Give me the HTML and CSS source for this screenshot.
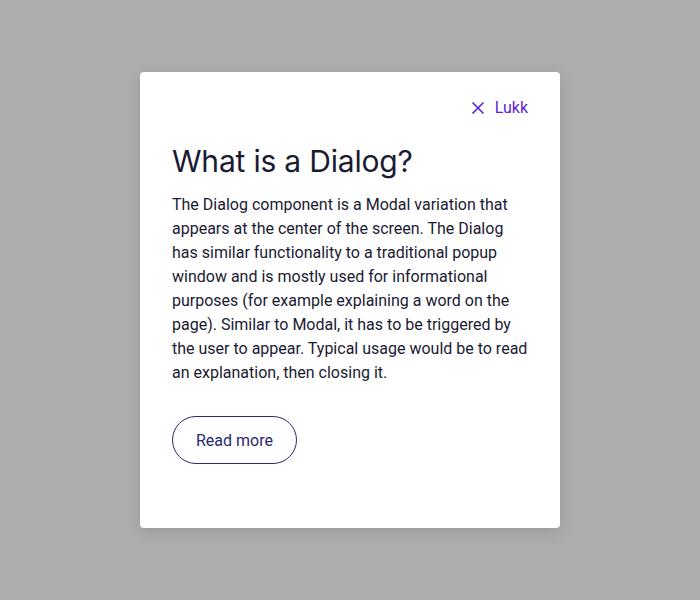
FILE: index.html
```html
<!DOCTYPE html>
<html lang="en">
<head>
<meta charset="utf-8">
<link rel="stylesheet" href="styles.css">
</head>
<body>
<div class="overlay">
  <div class="dialog" role="dialog">
    <div class="dialog-top">
      <button class="close">
        <svg width="14" height="14" viewBox="0 0 14 14" aria-hidden="true"><path d="M1.5 1.5 L12.5 12.5 M12.5 1.5 L1.5 12.5" stroke="currentColor" stroke-width="1.6" fill="none"/></svg>
        <span>Lukk</span>
      </button>
    </div>
    <h1 class="title">What is a Dialog?</h1>
    <p class="text">The Dialog component is a Modal variation that appears at the center of the screen. The Dialog has similar functionality to a traditional popup window and is mostly used for informational purposes (for example explaining a word on the page). Similar to Modal, it has to be triggered by the user to appear. Typical usage would be to read an explanation, then closing it.</p>
    <div class="actions">
      <button class="btn-outline">Read more</button>
    </div>
  </div>
</div>
</body>
</html>
```
FILE: styles.css
```css
html, body {
  margin: 0;
  padding: 0;
  height: 100%;
}
body {
  background: #adadad;
  font-family: Roboto, "Liberation Sans", sans-serif;
}
.overlay {
  height: 100%;
  display: flex;
  align-items: center;
  justify-content: center;
}
.dialog {
  width: 420px;
  box-sizing: border-box;
  background: #fff;
  border-radius: 4px;
  box-shadow: 0 4px 16px rgba(0,0,0,0.12);
  padding: 20px 32px 64px;
}
.dialog-top {
  display: flex;
  justify-content: flex-end;
}
.close {
  display: flex;
  align-items: center;
  gap: 10px;
  background: none;
  border: 0;
  padding: 4px 0;
  color: #5b1fd6;
  font-family: Roboto, sans-serif;
  font-size: 16px;
  line-height: 24px;
  cursor: pointer;
}
.close svg {
  display: block;
}
.title {
  margin: 19px 0 14px;
  font-family: Inter, "Noto Sans", sans-serif;
  font-weight: 400;
  font-size: 30px;
  line-height: 36px;
  color: #1b1a33;
  letter-spacing: -0.2px;
}
.text {
  margin: 0;
  font-size: 16px;
  line-height: 24px;
  color: #1b1a33;
}
.actions {
  margin-top: 31px;
  display: flex;
}
.btn-outline {
  height: 48px;
  padding: 0 23px;
  border: 1px solid #2a2870;
  border-radius: 24px;
  background: #fff;
  color: #2a2870;
  font-family: Roboto, sans-serif;
  font-size: 16px;
  cursor: pointer;
}
```
